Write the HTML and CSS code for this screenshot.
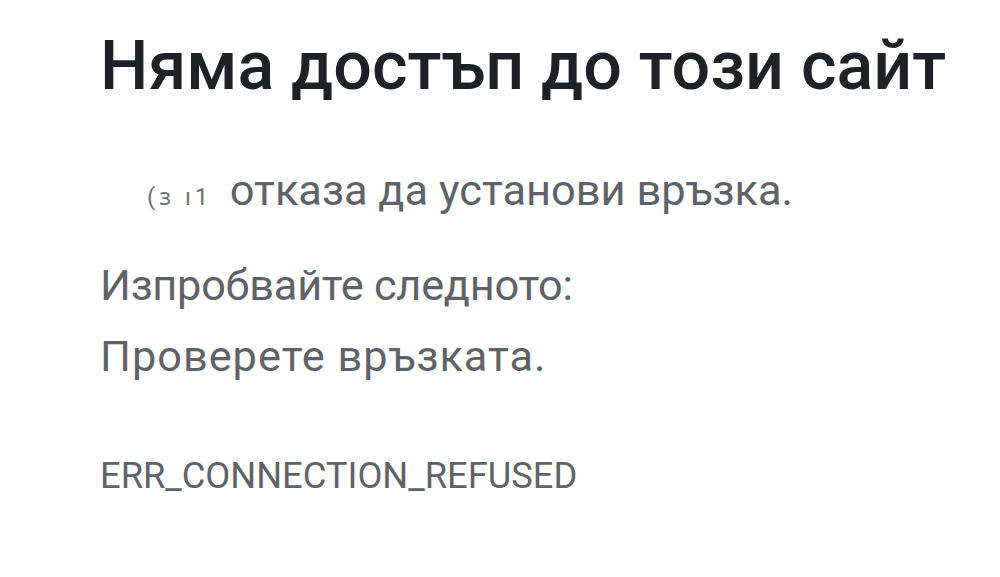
FILE: index.html
```html
<!DOCTYPE html>
<html lang="bg">
<head>
<meta charset="utf-8">
<link rel="stylesheet" href="styles.css">
</head>
<body>
<main class="page">
  <h1 class="title">Няма достъп до този сайт</h1>
  <p class="reason"><span class="host">(ɜ ı1</span> отказа да установи връзка.</p>
  <p class="hint first">Изпробвайте следното:</p>
  <p class="hint second">Проверете връзката.</p>
  <p class="code">ERR_CONNECTION_REFUSED</p>
</main>
</body>
</html>
```
FILE: styles.css
```css
html, body {
  margin: 0;
  padding: 0;
  background: #ffffff;
}
body {
  font-family: Roboto, "Noto Sans", sans-serif;
  width: 1000px;
  height: 577px;
  overflow: hidden;
}
.page {
  padding: 21px 0 0 100px;
}
.title {
  margin: 0;
  font-size: 68.2px;
  font-weight: 500;
  color: #202124;
  line-height: 90px;
}
.reason {
  margin: 55px 0 0 47px;
  font-size: 43.4px;
  color: #5f6368;
  line-height: 50px;
}
.host {
  display: inline-block;
  width: 72px;
  font-size: 24px;
  color: #6f7276;
  letter-spacing: 4px;
}
.hint {
  margin: 0;
  font-size: 43.3px;
  color: #5f6368;
  line-height: 71px;
}
.hint.first {
  margin-top: 28px;
  letter-spacing: -0.25px;
}
.hint.second {
  letter-spacing: 1px;
}
.code {
  margin: 62px 0 0;
  font-size: 36.3px;
  color: #5f6368;
  line-height: 44px;
}
```
